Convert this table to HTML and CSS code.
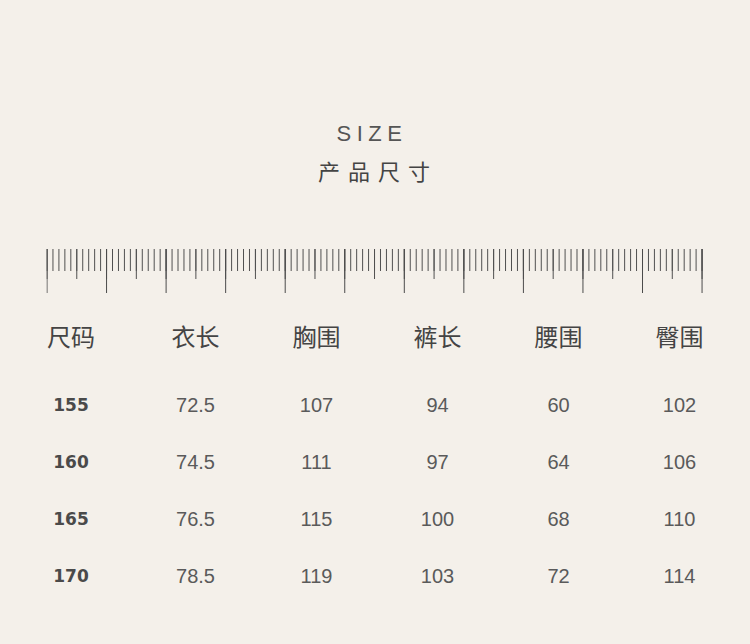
FILE: index.html
```html
<!DOCTYPE html>
<html lang="zh-CN">
<head>
  <meta charset="UTF-8" />
  <meta name="viewport" content="width=device-width, initial-scale=1.0"/>
  <title>SIZE - 产品尺寸</title>
  <link rel="stylesheet" href="styles.css">
</head>
<body>

<section class="size-card">
  <header class="title">
    <p class="title-en">SIZE</p>
    <h1 class="title-cn">产品尺寸</h1>
  </header>

  <!-- ruler: small tick every 5.955px, medium every 5, long every 10 -->
  <svg class="ruler" width="750" height="46" viewBox="0 0 750 46">
    <defs>
      <pattern id="tickS" x="46.5" y="0" width="5.955" height="46" patternUnits="userSpaceOnUse">
        <rect width="1" height="22" fill="#4f4f4f"/>
      </pattern>
      <pattern id="tickM" x="46.5" y="0" width="29.775" height="46" patternUnits="userSpaceOnUse">
        <rect width="1" height="30" fill="#4f4f4f"/>
      </pattern>
      <pattern id="tickL" x="46.5" y="0" width="59.55" height="46" patternUnits="userSpaceOnUse">
        <rect width="1" height="44" fill="#4a4a4a"/>
      </pattern>
    </defs>
    <rect x="46.5" y="0" width="656.6" height="46" fill="url(#tickS)"/>
    <rect x="46.5" y="0" width="656.6" height="46" fill="url(#tickM)"/>
    <rect x="46.5" y="0" width="656.6" height="46" fill="url(#tickL)"/>
  </svg>

  <div class="size-table">
    <div class="cell head">尺码</div>
    <div class="cell head">衣长</div>
    <div class="cell head">胸围</div>
    <div class="cell head">裤长</div>
    <div class="cell head">腰围</div>
    <div class="cell head">臀围</div>

    <div class="cell size">155</div><div class="cell">72.5</div><div class="cell">107</div><div class="cell">94</div><div class="cell">60</div><div class="cell">102</div>
    <div class="cell size">160</div><div class="cell">74.5</div><div class="cell">111</div><div class="cell">97</div><div class="cell">64</div><div class="cell">106</div>
    <div class="cell size">165</div><div class="cell">76.5</div><div class="cell">115</div><div class="cell">100</div><div class="cell">68</div><div class="cell">110</div>
    <div class="cell size">170</div><div class="cell">78.5</div><div class="cell">119</div><div class="cell">103</div><div class="cell">72</div><div class="cell">114</div>
  </div>
</section>

</body>
</html>
```

FILE: styles.css
```css
:root {
  --bg:#f4f0ea; --text:#4a4a4a; --num:#5a5a5a;
}
body{margin:0;background:var(--bg);color:var(--text);
     font-family:"Liberation Sans","Noto Sans CJK SC",sans-serif}
.size-card{width:750px;height:644px;overflow:hidden}

.title{text-align:center;padding-top:120px}
.title-en{margin:0;font-size:22px;line-height:28px;letter-spacing:5.5px;padding-right:6px;
          color:#555}
.title-cn{margin:8px 0 0;font-family:"Noto Sans CJK SC",sans-serif;font-weight:400;
          font-size:22px;line-height:28px;letter-spacing:8px;padding-left:6px;color:#444}

.ruler{display:block;margin-top:65px}

.size-table{display:grid;grid-template-columns:125px repeat(5,121px);padding-left:10px;
            margin-top:12px}
.cell{text-align:center;height:57px;line-height:57px;font-size:20px;color:var(--num)}
.cell:first-child,.cell.size{padding-right:3px}
.head{font-family:"Noto Sans CJK SC",sans-serif;font-size:24px;color:#444;margin-bottom:13px}
.size{font-family:"DejaVu Sans",sans-serif;font-weight:700;font-size:17px;color:#4a4a4a}
```
